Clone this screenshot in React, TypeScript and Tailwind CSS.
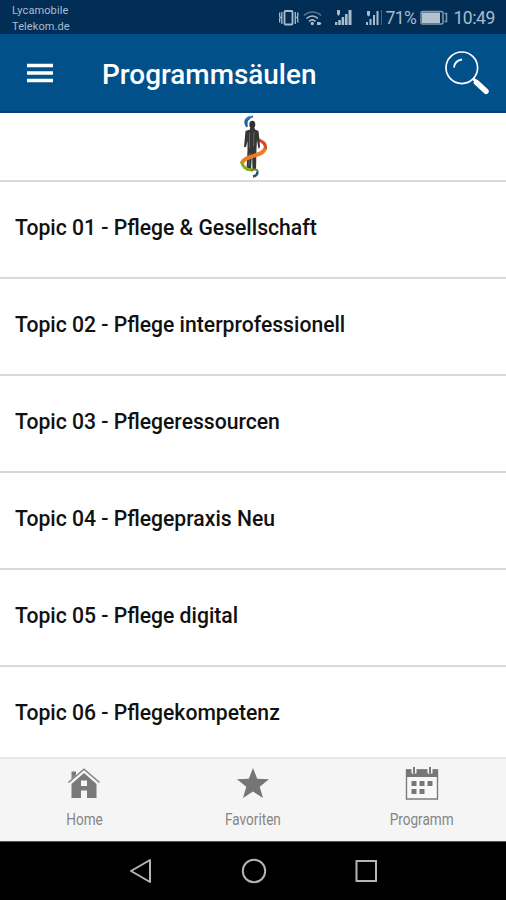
import type { ReactNode } from 'react';

const topics = [
  'Topic 01 - Pflege & Gesellschaft',
  'Topic 02 - Pflege interprofessionell',
  'Topic 03 - Pflegeressourcen',
  'Topic 04 - Pflegepraxis Neu',
  'Topic 05 - Pflege digital',
  'Topic 06 - Pflegekompetenz',
];

function StatusBar() {
  return (
    <div className="h-[34px] shrink-0 bg-[#022e55] text-[#a9bccd] flex justify-between pl-3 pr-[11px]">
      <div className="text-[11px] leading-[15.5px] pt-[3px] tracking-[0.1px]">
        <div>Lycamobile</div>
        <div>Telekom.de</div>
      </div>
      <div className="flex items-center pt-[2px]">
        <svg width="107" height="20" viewBox="0 0 107 20" fill="currentColor">
          {/* vibrate */}
          <rect x="5.500" y="3" width="8" height="13.500" rx="1" fill="none" stroke="currentColor" strokeWidth="1.800" />
          <path d="M.6 4.500v4l1 1-1 1v4M2.800 4v12M16.300 4v12M18.800 4.500v4l-1 1 1 1v4" fill="none" stroke="currentColor" strokeWidth="1.300" />
          {/* wifi */}
          <g fill="none" stroke="currentColor" strokeWidth="1.700">
            <path d="M25 7.500c5-4.700 12-4.700 17 0" opacity="0.500" />
            <path d="M27.500 10.500c3.500-3.300 8-3.300 11.500 0" />
            <path d="M30 13.300c2-1.800 4.500-1.800 6.500 0" />
          </g>
          <circle cx="33.300" cy="15.500" r="1.700" />
          <path d="M38 14h3l1.500 1.500L41 17h-3z" />
          {/* sim 1 */}
          <path d="M56 14h2.300v3H56zM59.200 12h2.600v5h-2.600zM62.600 9h2.600v8h-2.600zM66 6h2.600v11H66zM69.500 2h3v15h-3zM58 2h3v4l-1.500 2L58 6z" />
          {/* sim 2 */}
          <path d="M87 14h2v3h-2zM90.500 11h2v6h-2zM94 7h2v10h-2zM97.500 3h2v14h-2zM88 3h3v4l-1.500 1.500L88 7z" />
          <path d="M102 2h1v15h-1z" opacity="0.400" />
        </svg>
        <span className="text-[17.500px] leading-5 w-[35px] -ml-px tracking-[-0.500px]">71%</span>
        <svg width="28" height="16" viewBox="0 0 28 16">
          <rect x="1" y="1.500" width="22" height="12.500" rx="1.500" fill="none" stroke="#8299ad" strokeWidth="1.500" />
          <rect x="2" y="2.500" width="18" height="10.500" fill="#b2c2cf" />
          <path d="M24.500 3.500h2v8h-2" fill="none" stroke="#8299ad" strokeWidth="1.500" />
        </svg>
        <span className="text-[17.500px] leading-5 ml-[5px] tracking-[-0.400px]">10:49</span>
      </div>
    </div>
  );
}

function Header() {
  return (
    <header className="h-[79px] shrink-0 bg-[#02508a] border-b-2 border-[#064079] text-white flex items-center pl-[27px] pr-4">
      <svg width="26" height="20" viewBox="0 0 26 20" fill="currentColor">
        <path d="M0 0.700h26v3.600H0zM0 8.200h26v3.600H0zM0 15.700h26v3.600H0z" />
      </svg>
      <h1 className="ml-[49px] flex-1 text-[27.900px] leading-8 font-medium pt-[4px]">Programmsäulen</h1>
      <svg className="mt-px" width="46" height="46" viewBox="0 0 46 46" fill="none" stroke="currentColor">
        <circle cx="17.800" cy="17.800" r="15.800" strokeWidth="1.700" />
        <path d="M10 17.500c.5-4.500 3.500-7.500 8-8" strokeWidth="1.800" />
        <path d="M29 28.500l4 4" strokeWidth="3" />
        <path d="M32.500 32.500l9.500 8.800" strokeWidth="5.500" strokeLinecap="round" />
      </svg>
    </header>
  );
}

function Logo() {
  return (
    <svg width="32" height="66" viewBox="0 0 32 66" fill="none">
      <path d="M16 2.500C10 4 9 8 10 13C6 8 8.500 2 16 2.500z" fill="#205d97" stroke="#205d97" strokeWidth="1.500" />
      <path d="M9 6c1-2.500 3-3.500 6-3.500" stroke="#52a2cc" />
      <path d="M20.500 25.500c6 2 9 5.500 7.500 10" stroke="#d84a2c" strokeWidth="3.200" />
      <ellipse cx="15.300" cy="10.500" rx="3" ry="3.800" fill="#303030" />
      <path d="M13 13.500h4.500l.5 2 3.500 1.500 1 9 .5 7-1.500 2-1.500-9-.5 9-.5 21h-3.500L15 38l-1 18.500H9.500L10.500 36V27l-1.500 6-2 0L8.500 17l4.500-1.500z" fill="#363636" />
      <path d="M12.500 19v15M17 18l-.5 14M12.500 39l-.5 13" stroke="#656565" />
      <path d="M28 34.500c-2 8.500-21.500 6.500-23 15" stroke="#f07c22" strokeWidth="3.800" />
      <path d="M4.500 47.500c1 6 6 8.500 11.500 8.500" stroke="#88ad20" strokeWidth="3" />
      <path d="M14 56.500c3.500-1.500 6-1.500 7 1" stroke="#79852c" strokeWidth="2" />
      <path d="M20.500 57.500c0 2.500-1.500 4.500-4.500 5" stroke="#235181" strokeWidth="2.500" />
    </svg>
  );
}

function HomeIcon() {
  return (
    <svg width="34" height="34" viewBox="0 0 34 34" fill="#7a7a7a">
      <path d="M4.500 4.500h4.500v6l-4.500 4z" />
      <path fillRule="evenodd" d="M17 6l12.500 11v14H20v-7.500h-6V31H4.500V17zM14 13.500v5.500h6v-5.500z" />
      <path d="M1.500 16.500L17 3.500l15.500 13" fill="none" stroke="#f5f5f5" strokeWidth="3" />
      <path d="M1.500 15.500L17 2.200l15.500 13.300" fill="none" stroke="#858585" strokeWidth="1.600" />
    </svg>
  );
}

function StarIcon() {
  return (
    <svg width="34" height="34" viewBox="0 0 34 34" fill="#757575">
      <path d="M17 1l4.200 10.800L33 12.300l-9.300 7.400L27 31l-10-6.500L7 31l3.300-11.300L1 12.300l11.800-.5z" />
    </svg>
  );
}

function CalendarIcon() {
  return (
    <svg width="34" height="34" viewBox="0 0 34 34">
      <path d="M1.500 3h31v29h-31z" fill="#f8f8f8" stroke="#7c7c7c" strokeWidth="1.400" />
      <path d="M1 2.500h32v7.500H1z" fill="#767676" />
      <path d="M9 0v6.500M25 0v6.500" stroke="#f5f5f5" strokeWidth="5" />
      <path d="M9 0v6.500M25 0v6.500" stroke="#767676" strokeWidth="2" />
      <path d="M6.500 14h5v5h-5zM14.500 14h5v5h-5zM22.500 14h5v5h-5zM6.500 22h5v5h-5zM14.500 22h5v5h-5z" fill="#767676" />
    </svg>
  );
}

function Tab({ icon, label }: { icon: ReactNode; label: string }) {
  return (
    <button className="flex-1 flex flex-col items-center pt-[8px]">
      {icon}
      <span className="mt-[9px] text-base leading-5 text-[#858585] scale-x-[0.85]">{label}</span>
    </button>
  );
}

export default function App() {
  return (
    <div className="w-full h-screen flex flex-col overflow-hidden bg-white font-['Roboto',sans-serif]">
      <StatusBar />
      <Header />
      <main className="flex-1 min-h-0 overflow-hidden">
        <div className="h-[69px] border-b-2 border-[#d9d9d9] flex justify-center pt-px">
          <Logo />
        </div>
        {topics.map((topic) => (
          <div key={topic} className="h-[97px] border-b-2 border-[#d9d9d9] flex items-center px-[15px] pb-[4px]">
            <h3 className="text-[21.150px] leading-6 font-medium text-[#111]">{topic}</h3>
          </div>
        ))}
      </main>
      <nav className="h-[84px] shrink-0 bg-[#f5f5f5] border-t-2 border-[#e8e8e8] flex">
        <Tab icon={<HomeIcon />} label="Home" />
        <Tab icon={<StarIcon />} label="Favoriten" />
        <Tab icon={<CalendarIcon />} label="Programm" />
      </nav>
      <div className="h-[59px] shrink-0 bg-black border-t border-[#555] flex justify-center items-center gap-[88px] pl-px">
        <svg width="24" height="26" viewBox="0 0 24 26" fill="none" stroke="#b5b5b5" strokeWidth="2">
          <path d="M21 2v22L2 13z" strokeLinejoin="round" />
        </svg>
        <svg width="26" height="26" viewBox="0 0 26 26" fill="none" stroke="#b5b5b5" strokeWidth="2">
          <circle cx="13" cy="13" r="11.200" />
        </svg>
        <svg width="24" height="26" viewBox="0 0 24 26" fill="none" stroke="#b5b5b5" strokeWidth="2">
          <path d="M1.500 3H21v20H1.500z" />
        </svg>
      </div>
    </div>
  );
}
